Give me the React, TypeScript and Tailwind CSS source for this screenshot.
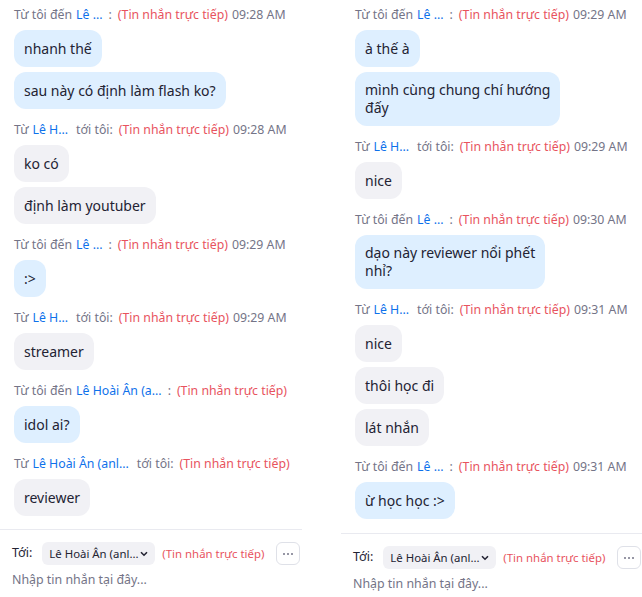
import React from "react";

type Group = {
  mine: boolean;
  name: string;
  time?: string;
  bubbles: string[][];
};

const FONT = { fontFamily: '"Noto Sans", "Open Sans", sans-serif' };

function Header({ g }: { g: Group }) {
  return (
    <div className="h-[20px] flex items-center whitespace-nowrap text-[12.3px] text-[#747487]">
      {g.mine ? (
        <>
          <span>Từ tôi đến</span>
          <span className="ml-[4px] text-[#0E71EB]">{g.name}</span>
          <span className="ml-[6px]">:</span>
        </>
      ) : (
        <>
          <span>Từ</span>
          <span className="ml-[4px] text-[#0E71EB]">{g.name}</span>
          <span className="ml-[8px]">tới tôi:</span>
        </>
      )}
      <span className="ml-[6px] text-[#E8535E]">(Tin nhắn trực tiếp)</span>
      {g.time && <span className="ml-[4px]">{g.time}</span>}
    </div>
  );
}

function Bubble({ lines, mine }: { lines: string[]; mine: boolean }) {
  return (
    <div
      className={`self-start min-h-[37px] flex flex-col justify-center rounded-[12px] px-[10px] py-[9px] text-[14px] leading-[18px] text-[#232333] whitespace-nowrap ${
        mine ? "bg-[#DEEFFF]" : "bg-[#F1F1F5]"
      }`}
    >
      {lines.map((l, i) => (
        <div key={i}>{l}</div>
      ))}
    </div>
  );
}

function Panel({ groups, sepGap }: { groups: Group[]; sepGap: string }) {
  return (
    <div className="w-[302px] shrink-0 flex flex-col" style={FONT}>
      <div className="flex flex-col gap-[11px] pt-[5px] px-[14px]">
        {groups.map((g, i) => (
          <div key={i} className="flex flex-col gap-[5px]">
            <Header g={g} />
            {g.bubbles.map((b, j) => (
              <Bubble key={j} lines={b} mine={g.mine} />
            ))}
          </div>
        ))}
      </div>
      <div className={`${sepGap} h-px bg-[#E9EAF0]`} />
      <div className="flex items-center mt-[12px] pl-[12px] h-[23px]">
        <span className="text-[12.5px] text-[#232333]">Tới:</span>
        <div className="ml-[10px] h-[23px] w-[113px] rounded-[6px] bg-[#F1F1F5] flex items-center pl-[7px] pr-[7px] text-[11.4px] text-[#232333] whitespace-nowrap">
          <span>Lê Hoài Ân (anl...</span>
          <svg className="ml-auto" width="8" height="6" viewBox="0 0 8 6">
            <path d="M1 1.2 L4 4.2 L7 1.2" stroke="#232333" strokeWidth="1.6" fill="none" />
          </svg>
        </div>
        <span className="ml-[7px] text-[11.4px] text-[#E8535E] whitespace-nowrap">(Tin nhắn trực tiếp)</span>
        <div className="ml-auto mr-[2px] w-[24px] h-[23px] rounded-[6px] border border-[#DFE1E8] bg-white flex items-center justify-center gap-[2px]">
          <span className="w-[2px] h-[2px] rounded-full bg-[#747487]" />
          <span className="w-[2px] h-[2px] rounded-full bg-[#747487]" />
          <span className="w-[2px] h-[2px] rounded-full bg-[#747487]" />
        </div>
      </div>
      <div className="mt-[5px] pl-[12px] text-[12.4px] leading-[20px] text-[#747487]">Nhập tin nhắn tại đây...</div>
    </div>
  );
}

const left: Group[] = [
  { mine: true, name: "Lê ...", time: "09:28 AM", bubbles: [["nhanh thế"], ["sau này có định làm flash ko?"]] },
  { mine: false, name: "Lê H...", time: "09:28 AM", bubbles: [["ko có"], ["định làm youtuber"]] },
  { mine: true, name: "Lê ...", time: "09:29 AM", bubbles: [[":>"]] },
  { mine: false, name: "Lê H...", time: "09:29 AM", bubbles: [["streamer"]] },
  { mine: true, name: "Lê Hoài Ân (a...", bubbles: [["idol ai?"]] },
  { mine: false, name: "Lê Hoài Ân (anl...", bubbles: [["reviewer"]] },
];

const right: Group[] = [
  { mine: true, name: "Lê ...", time: "09:29 AM", bubbles: [["à thế à"], ["mình cùng chung chí hướng", "đấy"]] },
  { mine: false, name: "Lê H...", time: "09:29 AM", bubbles: [["nice"]] },
  { mine: true, name: "Lê ...", time: "09:30 AM", bubbles: [["dạo này reviewer nổi phết", "nhỉ?"]] },
  { mine: false, name: "Lê H...", time: "09:31 AM", bubbles: [["nice"], ["thôi học đi"], ["lát nhắn"]] },
  { mine: true, name: "Lê ...", time: "09:31 AM", bubbles: [["ừ học học :>"]] },
];

export default function App() {
  return (
    <div className="w-[642px] h-[597px] bg-white overflow-hidden flex">
      <Panel groups={left} sepGap="mt-[13px]" />
      <div className="w-[39px] shrink-0" />
      <Panel groups={right} sepGap="mt-[14px]" />
    </div>
  );
}
